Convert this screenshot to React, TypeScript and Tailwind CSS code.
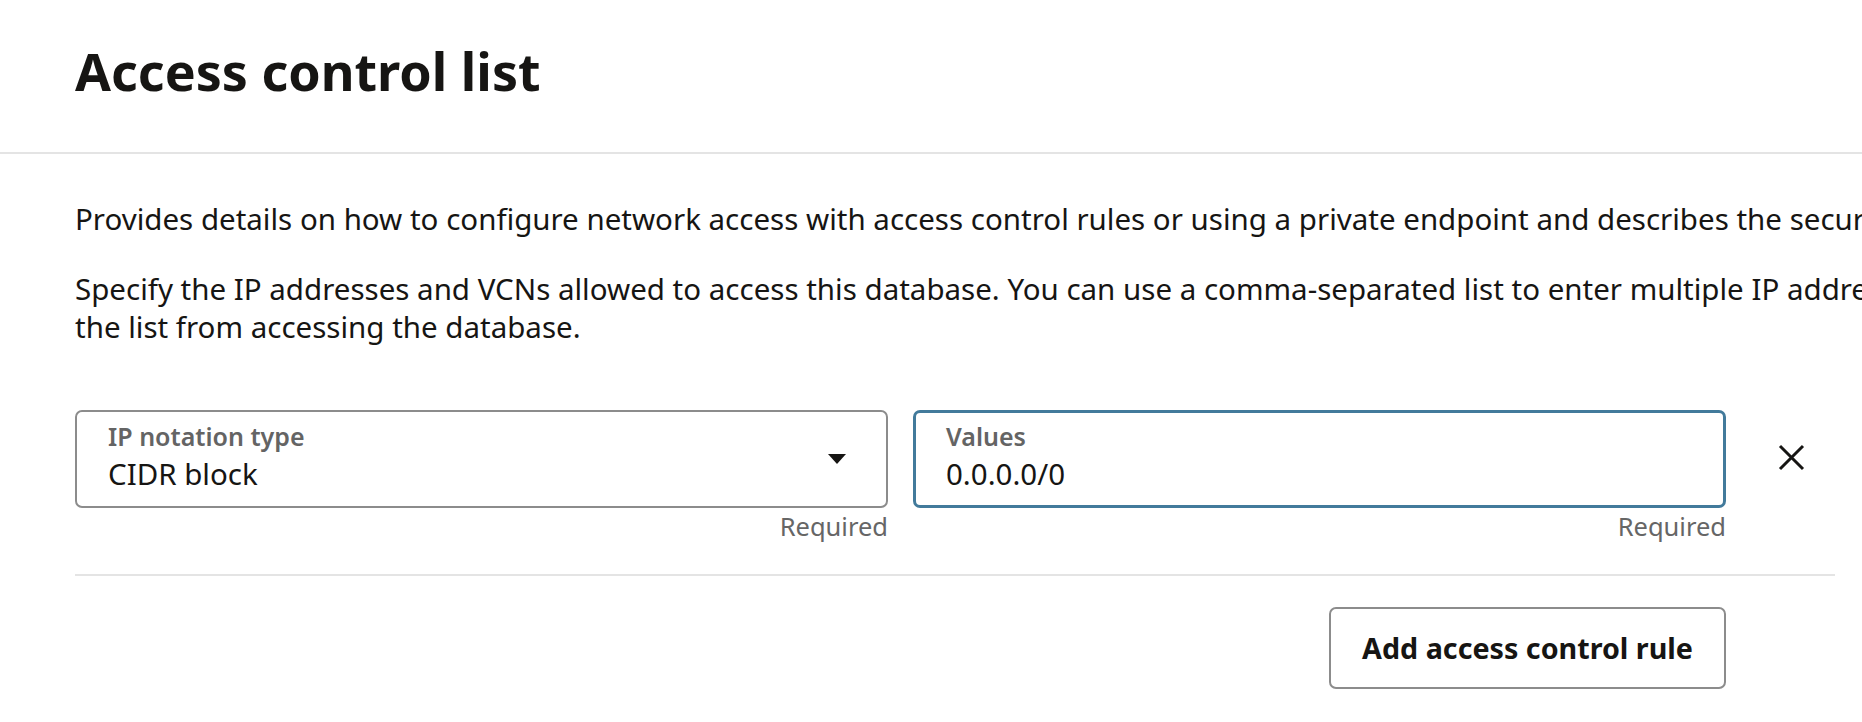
import React from 'react';

function Field({ label, value, active, withArrow }: { label: string; value: string; active?: boolean; withArrow?: boolean }) {
  return (
    <div className="flex-1 min-w-0">
      <div
        className={
          active
            ? 'relative h-[98px] rounded-[7px] border-[3px] border-[#427a9b] pl-[30px] pt-[8px]'
            : 'relative h-[98px] rounded-[7px] border-2 border-[#8c8c8c] pl-[31px] pt-[9px]'
        }
      >
        <div className="text-[25px] leading-[30px] font-semibold text-[#646464]">{label}</div>
        <div className="mt-[5px] text-[29.5px] leading-[36px] text-[#161513]">{value}</div>
        {withArrow && (
          <svg className="absolute right-[40px] top-[42px]" width="18" height="10" viewBox="0 0 18 10">
            <path d="M0 0 H18 L9 10 Z" fill="#161513" />
          </svg>
        )}
      </div>
      <div className="text-right text-[25.5px] leading-[32px] text-[#666666] mt-[2px]">Required</div>
    </div>
  );
}

export default function App() {
  return (
    <div className="min-h-screen w-full overflow-hidden bg-white text-[#161513] font-['Noto_Sans','Open_Sans',sans-serif]">
      <header className="h-[154px] border-b-2 border-[#e4e4e4] px-[75px] pt-[38px]">
        <h1 className="text-[52px] leading-[66px] font-bold">Access control list</h1>
      </header>

      <div className="px-[75px] pt-[46px]">
        <p className="text-[29.5px] leading-[38px] whitespace-nowrap">
          Provides details on how to configure network access with access control rules or using a private endpoint and describes the security implications.
        </p>
        <p className="mt-[32px] text-[29.5px] leading-[38px] whitespace-nowrap">
          Specify the IP addresses and VCNs allowed to access this database. You can use a comma-separated list to enter multiple IP addresses or CIDR blocks. An access control list blocks all the IP addresses that are not in
          <br />
          the list from accessing the database.
        </p>

        <div className="w-[1760px] mt-[64px]">
          <div className="flex items-start">
            <Field label="IP notation type" value="CIDR block" withArrow />
            <div className="w-[25px] shrink-0" />
            <Field label="Values" value="0.0.0.0/0" active />
            <div className="w-[109px] shrink-0 pl-[52px] pt-[34px]">
              <svg width="27" height="27" viewBox="0 0 27 27">
                <path d="M2 2 L25 25 M25 2 L2 25" stroke="#161513" strokeWidth="3" fill="none" />
              </svg>
            </div>
          </div>

          <div className="mt-[32px] border-t-2 border-[#e4e4e4]" />

          <div className="flex justify-end pr-[109px] pt-[31px]">
            <button className="h-[82px] px-[31px] rounded-[7px] border-2 border-[#8c8c8c] bg-white text-[28.7px] font-bold text-[#161513]">
              Add access control rule
            </button>
          </div>
        </div>
      </div>
    </div>
  );
}
